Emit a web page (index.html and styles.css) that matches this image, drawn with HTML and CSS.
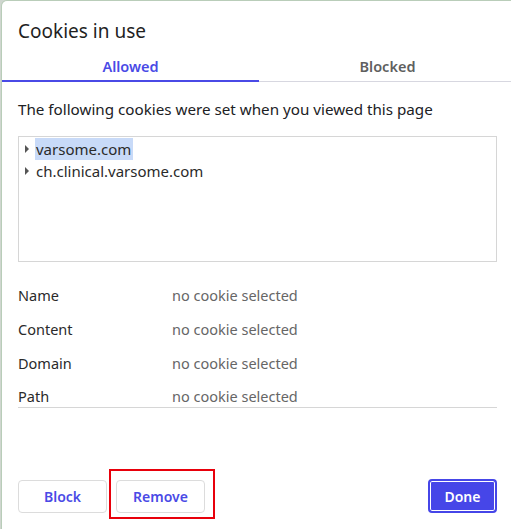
FILE: index.html
```html
<!DOCTYPE html>
<html>
<head>
<meta charset="utf-8">
<link rel="stylesheet" href="styles.css">
</head>
<body>
<div class="dialog">
  <h1 class="title">Cookies in use</h1>
  <div class="tabs">
    <div class="tab active">Allowed</div>
    <div class="tab">Blocked</div>
  </div>
  <div class="content">
    <p class="desc">The following cookies were set when you viewed this page</p>
    <div class="tree">
      <div class="node"><span class="arrow"></span><span class="label selected">varsome.com</span></div>
      <div class="node"><span class="arrow"></span><span class="label">ch.clinical.varsome.com</span></div>
    </div>
    <div class="details">
      <div class="row"><span class="key">Name</span><span class="val">no cookie selected</span></div>
      <div class="row"><span class="key">Content</span><span class="val">no cookie selected</span></div>
      <div class="row"><span class="key">Domain</span><span class="val">no cookie selected</span></div>
      <div class="row"><span class="key">Path</span><span class="val">no cookie selected</span></div>
    </div>
    <div class="buttons">
      <button class="btn">Block</button>
      <span class="highlight"><button class="btn">Remove</button></span>
      <span class="spacer"></span>
      <button class="btn primary">Done</button>
    </div>
  </div>
</div>
</body>
</html>
```

FILE: styles.css
```css
html, body {
  margin: 0;
  padding: 0;
  height: 100%;
  overflow: hidden;
}
body {
  background: #cfd6cf;
  font-family: "Noto Sans", "Open Sans", sans-serif;
  color: #202124;
}
.dialog {
  margin: 1px 0 0 2px;
  width: 514px;
  height: 540px;
  background: #fff;
  border-top-left-radius: 5px;
  box-shadow: 0 0 0 1px #b9cdb9;
  display: flex;
  flex-direction: column;
}
.title {
  margin: 0;
  font-size: 19px;
  font-weight: normal;
  line-height: 26px;
  padding: 17px 16px 7px;
  color: #1f1f1f;
}
.tabs {
  display: grid;
  grid-template-columns: 257px 1fr;
  border-bottom: 1px solid #d7d7e0;
}
.tab {
  text-align: center;
  font-size: 14.5px;
  font-weight: 600;
  color: #5f5f5f;
  line-height: 20px;
  padding: 5px 0 4px;
  border-bottom: 2px solid transparent;
  margin-bottom: -1px;
}
.tab.active {
  color: #4a4ae6;
  border-bottom-color: #4a4ae6;
}
.content {
  padding: 0 19px 0 16px;
  display: flex;
  flex-direction: column;
  flex: 1;
}
.desc {
  margin: 17px 0 0;
  font-size: 15.2px;
  line-height: 20px;
  color: #202124;
}
.tree {
  margin-top: 17px;
  height: 123px;
  border: 1px solid #d6d6d6;
  padding-top: 1px;
}
.node {
  display: flex;
  align-items: center;
  height: 22px;
  font-size: 15px;
  color: #2a2a2a;
}
.arrow {
  width: 0;
  height: 0;
  border-left: 4px solid #555;
  border-top: 4px solid transparent;
  border-bottom: 4px solid transparent;
  margin: 0 10px 0 6px;
}
.label {
  padding: 0 2px 0 1px;
  line-height: 22px;
  margin-left: -4px;
}
.label.selected {
  background: #c8daf8;
}
.details {
  margin-top: 16px;
  border-bottom: 1px solid #d6d6d6;
}
.row {
  display: flex;
  height: 34px;
  align-items: center;
  font-size: 14.5px;
  line-height: 20px;
}
.row:last-child {
  height: 27px;
  align-items: flex-start;
  padding-top: 6px;
  box-sizing: border-box;
}
.key {
  width: 154px;
  color: #2a2a2a;
}
.val {
  color: #666;
}
.buttons {
  margin-top: auto;
  margin-bottom: 28px;
  display: flex;
  align-items: center;
  gap: 9px;
}
.btn {
  font-family: inherit;
  font-size: 14px;
  font-weight: 600;
  color: #4a4ae6;
  background: #fff;
  border: 1px solid #dcdcdc;
  border-radius: 4px;
  height: 33px;
  width: 89px;
  padding: 0;
}
.highlight {
  display: inline-flex;
  border: 2px solid #e8000b;
  padding: 9px 8px 4px 5px;
  margin: -11px -10px -6px -7px;
}
.spacer {
  flex: 1;
}
.btn.primary {
  width: 69px;
  height: 34px;
  background: #4646e8;
  color: #fff;
  border: 2px solid #4646e8;
  box-shadow: inset 0 0 0 1px #fff;
}
```
